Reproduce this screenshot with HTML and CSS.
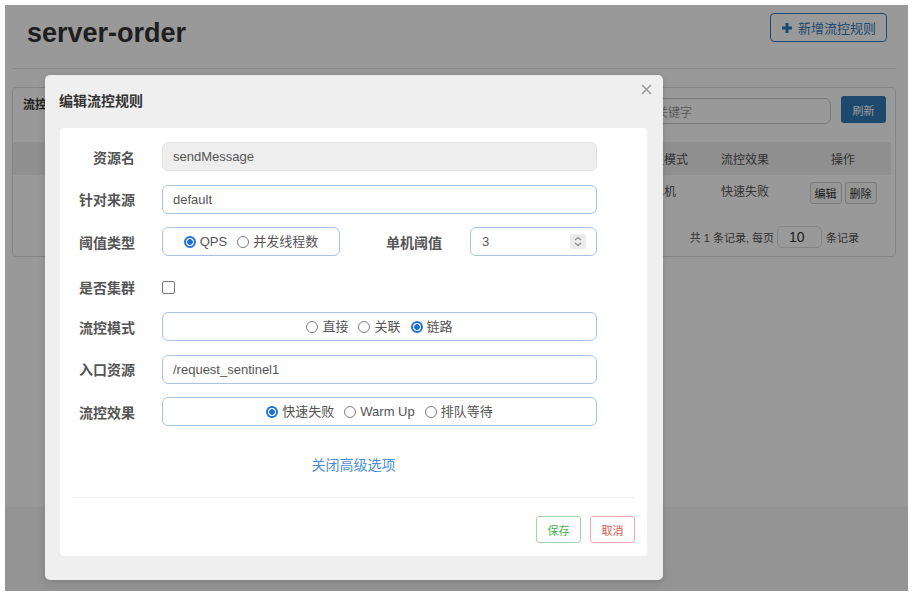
FILE: index.html
```html
<!DOCTYPE html>
<html lang="zh-CN">
<head>
<meta charset="utf-8">
<title>server-order</title>
<link rel="stylesheet" href="styles.css">
</head>
<body>
<div class="screen">
  <div class="page">
    <div class="content">
      <header class="page-header">
        <h1 class="page-title">server-order</h1>
        <button class="btn-add" type="button">
          <svg class="plus" width="10" height="10" viewBox="0 0 10 10"><path d="M5 0V10M0 5H10" stroke="#337ab7" stroke-width="3"/></svg>
          新增流控规则
        </button>
      </header>
      <section class="panel">
        <div class="toolbar">
          <span class="toolbar-title">流控规则</span>
          <div class="search"><span class="placeholder">请输入关键字</span></div>
          <button class="btn-refresh" type="button">刷新</button>
        </div>
        <div class="table">
          <div class="thead">
            <span>资源名</span><span>来源应用</span><span>流控模式</span><span>阈值类型</span><span>单机阈值</span><span>阈值模式</span><span>流控效果</span><span>操作</span>
          </div>
          <div class="trow">
            <span>sendMessage</span><span>default</span><span>链路</span><span>QPS</span><span>3</span><span>单机</span><span>快速失败</span>
            <span class="ops"><button class="btn-op" type="button">编辑</button><button class="btn-op" type="button">删除</button></span>
          </div>
        </div>
        <div class="pager"><span>共 1 条记录, 每页</span><span class="page-size">10</span><span>条记录</span></div>
      </section>
    </div>
    <div class="page-bottom"></div>
  </div>

  <div class="backdrop"></div>

  <div class="modal">
    <div class="modal-header">
      <h2 class="modal-title">编辑流控规则</h2>
      <svg class="close" width="11" height="11" viewBox="0 0 11 11"><path d="M1 1L10 10M10 1L1 10" stroke="#9c9c9c" stroke-width="1.6"/></svg>
    </div>
    <div class="card">
      <div class="form">
        <div class="form-row">
          <label class="label">资源名</label>
          <div class="input disabled">sendMessage</div>
        </div>
        <div class="form-row">
          <label class="label">针对来源</label>
          <div class="input">default</div>
        </div>
        <div class="form-row">
          <label class="label">阈值类型</label>
          <div class="split">
            <div class="radio-box small">
              <span class="radio checked"><i></i>QPS</span>
              <span class="radio"><i></i>并发线程数</span>
            </div>
            <label class="label inline">单机阈值</label>
            <div class="input number">
              <span>3</span>
              <svg class="spin" width="16" height="15" viewBox="0 0 16 15"><rect width="16" height="15" rx="3" fill="#ebebeb"/><path d="M5 6L8 3.5L11 6M5 9L8 11.5L11 9" fill="none" stroke="#8a8a8a" stroke-width="1.2"/></svg>
            </div>
          </div>
        </div>
        <div class="form-row check-row">
          <label class="label">是否集群</label>
          <div><span class="checkbox"></span></div>
        </div>
        <div class="form-row">
          <label class="label">流控模式</label>
          <div class="radio-box">
            <span class="radio"><i></i>直接</span>
            <span class="radio"><i></i>关联</span>
            <span class="radio checked"><i></i>链路</span>
          </div>
        </div>
        <div class="form-row">
          <label class="label">入口资源</label>
          <div class="input">/request_sentinel1</div>
        </div>
        <div class="form-row">
          <label class="label">流控效果</label>
          <div class="radio-box">
            <span class="radio checked"><i></i>快速失败</span>
            <span class="radio"><i></i>Warm Up</span>
            <span class="radio"><i></i>排队等待</span>
          </div>
        </div>
      </div>
      <div class="advanced">关闭高级选项</div>
      <div class="divider"></div>
      <div class="footer">
        <button class="btn-save" type="button">保存</button>
        <button class="btn-cancel" type="button">取消</button>
      </div>
    </div>
  </div>
</div>
</body>
</html>
```

FILE: styles.css
```css
* { box-sizing: border-box; }

html, body {
  margin: 0;
  padding: 0;
  background: #ffffff;
  font-family: "Liberation Sans", "Noto Sans CJK SC", sans-serif;
  color: #333;
}

.screen {
  margin: 5px 0 0 5px;
  width: 903px;
  height: 586px;
  position: relative;
  overflow: hidden;
}

/* ---------- background page ---------- */
.page {
  height: 100%;
  display: flex;
  flex-direction: column;
  background: #f7f7f7;
}

.content {
  height: 502px;
  background: #ffffff;
  padding: 0 12px 0 7px;
}

.page-bottom { flex: 1; }

.page-header {
  height: 64px;
  border-bottom: 1px solid #e6e6e6;
  display: flex;
  justify-content: space-between;
  align-items: flex-start;
  padding: 0 9px 0 15px;
}

.page-title {
  margin: 12px 0 0;
  font-size: 27px;
  line-height: 32px;
  font-weight: bold;
  color: #333;
  font-family: "Liberation Sans", sans-serif;
}

.btn-add {
  margin-top: 8px;
  height: 29px;
  padding: 0 10px 0 11px;
  border: 1px solid #337ab7;
  border-radius: 4px;
  background: #fff;
  color: #337ab7;
  font-family: "Liberation Sans", "Noto Sans CJK SC", sans-serif;
  font-size: 13px;
  display: flex;
  align-items: center;
  gap: 6px;
}

.panel {
  margin-top: 18px;
  border: 1px solid #dddddd;
  border-radius: 4px;
  background: #fff;
}

.toolbar {
  height: 54px;
  display: flex;
  align-items: flex-start;
  padding: 8px 9px 0 10px;
}

.toolbar-title {
  margin-top: 1px;
  font-size: 12px;
  line-height: 16px;
  font-weight: bold;
  color: #333;
  flex: 1;
}

.search {
  margin-top: 2px;
  width: 222px;
  height: 26px;
  border: 1px solid #cccccc;
  border-radius: 6px;
  padding: 0 10px;
  display: flex;
  align-items: center;
  font-size: 12px;
}

.placeholder { color: #999; }

.btn-refresh {
  margin-left: 10px;
  width: 45px;
  height: 27px;
  border: none;
  border-radius: 3px;
  background: #337ab7;
  color: #fff;
  font-family: "Noto Sans CJK SC", sans-serif;
  font-size: 11px;
}

.table { padding-right: 4px; }

.thead, .trow {
  display: grid;
  grid-template-columns: 200px 110px 110px 100px 100px 62px 100px 96px;
  font-size: 12px;
  color: #555;
}

.thead {
  height: 33px;
  background: #eeeeee;
  align-items: center;
  text-align: center;
}

.trow {
  height: 40px;
  align-items: start;
  text-align: center;
  padding-top: 9px;
  line-height: 16px;
}

.ops {
  display: flex;
  justify-content: center;
  gap: 3px;
  margin-top: -2px;
}

.btn-op {
  width: 32px;
  height: 22px;
  padding: 0;
  border: 1px solid #cccccc;
  border-radius: 3px;
  background: #fafafa;
  color: #333;
  font-family: "Noto Sans CJK SC", sans-serif;
  font-size: 11px;
}

.pager {
  height: 41px;
  padding: 2px 36px 0 0;
  display: flex;
  justify-content: flex-end;
  align-items: center;
  font-size: 11px;
  color: #555;
  white-space: pre;
}

.page-size {
  width: 45px;
  height: 22px;
  margin: 0 4px 0 3px;
  border: 1px solid #dddddd;
  border-radius: 5px;
  padding-left: 11px;
  display: inline-flex;
  align-items: center;
  font-size: 14px;
  color: #333;
}

/* ---------- overlay & modal ---------- */
.backdrop {
  position: absolute;
  inset: 0;
  background: rgba(0, 0, 0, 0.4);
}

.modal {
  position: absolute;
  left: 40px;
  top: 70px;
  width: 618px;
  height: 505px;
  background: #efefef;
  border-radius: 5px;
  padding: 0 16px 0 15px;
  box-shadow: 0 2px 8px rgba(0, 0, 0, 0.15);
}

.modal-header {
  height: 53px;
  display: flex;
  justify-content: space-between;
  align-items: flex-start;
}

.modal-title {
  margin: 15px 0 0 -1px;
  font-size: 14px;
  line-height: 20px;
  font-weight: bold;
  color: #333;
  font-family: "Noto Sans CJK SC", sans-serif;
}

.close { margin: 9px -5px 0 0; }

.card {
  width: 587px;
  height: 428px;
  background: #ffffff;
  border-radius: 4px;
  padding-top: 14px;
}

.form { padding-bottom: 1px; }

.form-row {
  display: grid;
  grid-template-columns: 75px 435px;
  column-gap: 27px;
  align-items: center;
  height: 29px;
  margin-bottom: 13.5px;
}

.form-row:last-child { margin-bottom: 0; }

.label {
  text-align: right;
  font-family: "Noto Sans CJK SC", sans-serif;
  font-size: 14px;
  line-height: 20px;
  font-weight: bold;
  color: #555;
  white-space: nowrap;
}

.input {
  height: 29px;
  border: 1px solid #a7c2e4;
  border-radius: 6px;
  padding: 0 10px;
  display: flex;
  align-items: center;
  font-size: 13px;
  color: #555;
}

.input.disabled {
  background: #eeeeee;
  border-color: #e3e3e3;
}

.split {
  display: flex;
  align-items: center;
}

.radio-box {
  height: 29px;
  border: 1px solid #a7c2e4;
  border-radius: 6px;
  display: flex;
  justify-content: center;
  align-items: center;
  gap: 10px;
}

.radio-box.small { width: 178px; }

.label.inline {
  flex: 1;
  margin-right: 28px;
}

.input.number {
  width: 127px;
  justify-content: space-between;
  padding: 0 10px 0 11px;
}

.radio {
  display: inline-flex;
  align-items: center;
  gap: 4px;
  font-size: 13px;
  line-height: 16px;
  color: #555;
  white-space: nowrap;
}

.radio i {
  width: 12px;
  height: 12px;
  border: 1.5px solid #7d7d7d;
  border-radius: 50%;
  background: #fff;
  flex: none;
}

.radio.checked i {
  border: 2px solid #1f6fd8;
  background: radial-gradient(circle, #1f6fd8 0 2.6px, #ffffff 3.1px);
}

.check-row { padding-top: 6px; }

.checkbox {
  display: block;
  width: 13px;
  height: 13px;
  border: 1.5px solid #777;
  border-radius: 2px;
  background: #fff;
}

.advanced {
  margin-top: 27px;
  text-align: center;
  font-family: "Noto Sans CJK SC", sans-serif;
  font-size: 14px;
  line-height: 20px;
  color: #4a8ed5;
}

.divider {
  margin: 23px 12px 0;
  border-top: 1px solid #eeeeee;
}

.footer {
  display: flex;
  justify-content: flex-end;
  gap: 9px;
  padding: 18px 12px 0;
}

.btn-save, .btn-cancel {
  width: 45px;
  height: 27px;
  padding: 0;
  border-radius: 3px;
  background: #fff;
  font-family: "Noto Sans CJK SC", sans-serif;
  font-size: 11px;
}

.btn-save {
  border: 1px solid #9fd6a9;
  color: #4cae4c;
}

.btn-cancel {
  border: 1px solid #f0a9b3;
  color: #d9534f;
}
```
